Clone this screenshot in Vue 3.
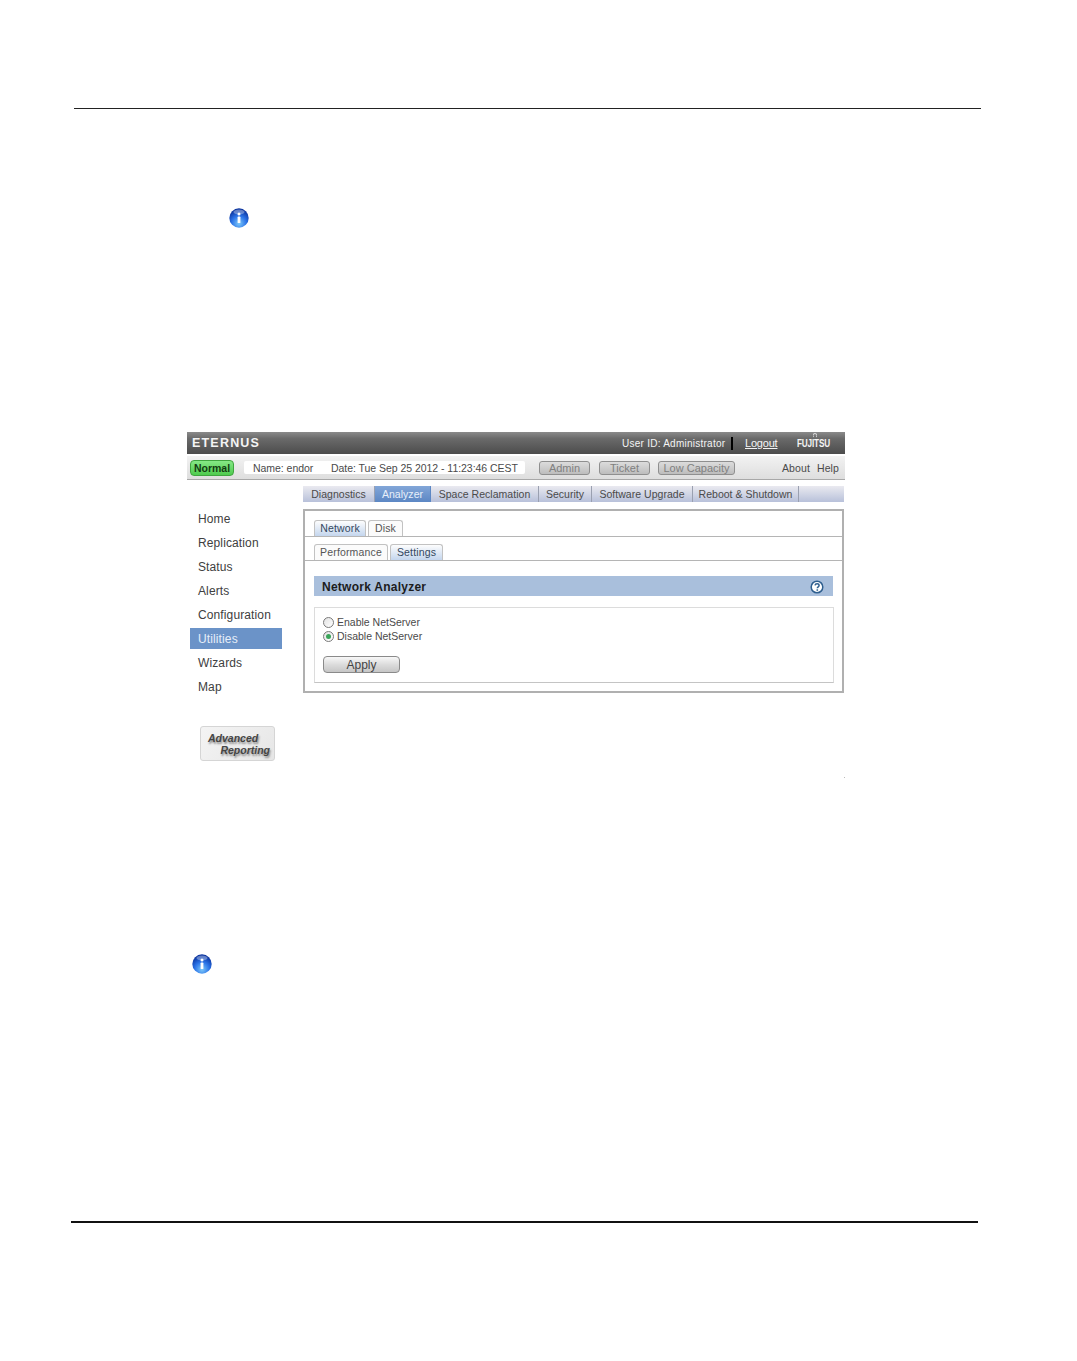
<script setup>
const navItems = ['Home', 'Replication', 'Status', 'Alerts', 'Configuration', 'Utilities', 'Wizards', 'Map']
const mainTabs = [
  { label: 'Diagnostics', w: 72 },
  { label: 'Analyzer', w: 56, active: true },
  { label: 'Space Reclamation', w: 108 },
  { label: 'Security', w: 53 },
  { label: 'Software Upgrade', w: 101 },
  { label: 'Reboot & Shutdown', w: 106 }
]
</script>

<template>
  <div class="page">
    <div class="top-rule"></div>

    <svg class="info info-a" viewBox="0 0 20 20" width="20" height="20" aria-hidden="true">
      <defs>
        <radialGradient id="ball" cx="50%" cy="78%" r="70%">
          <stop offset="0" stop-color="#7cc8fb" />
          <stop offset="0.55" stop-color="#2a72e6" />
          <stop offset="1" stop-color="#0b35a0" />
        </radialGradient>
      </defs>
      <circle cx="10" cy="10" r="9.700" fill="url(#ball)" />
      <ellipse cx="10" cy="4" rx="5.500" ry="2.600" fill="#fff" opacity="0.35" />
      <circle cx="10" cy="6" r="1.500" fill="#fff" />
      <rect x="8.600" y="8.600" width="2.800" height="6.400" rx="0.600" fill="#fff" />
    </svg>

    <section class="screen">
      <header class="brand-bar">
        <span class="brand">ETERNUS</span>
        <span class="user">User ID: Administrator</span>
        <span class="divider"></span>
        <span class="logout">Logout</span>
        <span class="fujitsu">FUJITSU</span>
      </header>

      <div class="status-bar">
        <span class="pill">Normal</span>
        <div class="identity">
          <span class="name">Name: endor</span>
          <span>Date: Tue Sep 25 2012 - 11:23:46 CEST</span>
        </div>
        <span class="alert-btn admin">Admin</span>
        <span class="alert-btn ticket">Ticket</span>
        <span class="alert-btn capacity">Low Capacity</span>
        <span class="about">About</span>
        <span class="help">Help</span>
      </div>

      <div class="body">
        <aside class="side">
          <nav class="nav">
            <div
              v-for="item in navItems"
              :key="item"
              class="nav-item"
              :class="{ current: item === 'Utilities' }"
            >{{ item }}</div>
          </nav>
          <div class="report">
            <span>Advanced</span>
            <span class="report-b">Reporting</span>
          </div>
        </aside>

        <main class="main">
          <div class="main-tabs">
            <div
              v-for="tab in mainTabs"
              :key="tab.label"
              class="main-tab"
              :class="{ active: tab.active }"
              :style="{ width: tab.w + 'px' }"
            >{{ tab.label }}</div>
          </div>

          <div class="panel">
            <div class="sub-row first">
              <span class="sub-tab on w-network">Network</span>
              <span class="sub-tab w-disk">Disk</span>
            </div>
            <div class="sub-row second">
              <span class="sub-tab w-perf">Performance</span>
              <span class="sub-tab on w-set">Settings</span>
            </div>

            <div class="title-bar">
              <span>Network Analyzer</span>
              <svg viewBox="0 0 14 14" width="14" height="14" aria-hidden="true">
                <circle cx="7" cy="7" r="5.800" fill="#fff" stroke="#2f5f8f" stroke-width="1.500" />
                <path d="M5 5.400c.2-1.200 1-1.700 2.100-1.700s2 .7 2 1.700c0 1.400-1.800 1.400-1.800 2.800" fill="none" stroke="#2f5f8f" stroke-width="1.500" />
                <rect x="6.500" y="9.300" width="1.600" height="1.500" fill="#2f5f8f" />
              </svg>
            </div>

            <div class="form-box">
              <label class="radio-row">
                <span class="radio"></span>
                <span>Enable NetServer</span>
              </label>
              <label class="radio-row">
                <span class="radio checked"></span>
                <span>Disable NetServer</span>
              </label>
              <div class="apply">Apply</div>
            </div>
          </div>
        </main>
      </div>
      <span class="speck"></span>
    </section>

    <svg class="info info-b" viewBox="0 0 20 20" width="20" height="20" aria-hidden="true">
      <circle cx="10" cy="10" r="9.700" fill="url(#ball)" />
      <ellipse cx="10" cy="4" rx="5.500" ry="2.600" fill="#fff" opacity="0.35" />
      <circle cx="10" cy="6" r="1.500" fill="#fff" />
      <rect x="8.600" y="8.600" width="2.800" height="6.400" rx="0.600" fill="#fff" />
    </svg>

    <div class="bottom-rule"></div>
  </div>
</template>

<style>
html, body { margin: 0; background: #fff; }
</style>

<style scoped>
.page {
  width: 1077px;
  height: 1361px;
  overflow: hidden;
  background: #fff;
  font-family: "Liberation Sans", Arial, sans-serif;
  color: #333;
}
.top-rule {
  margin: 108px 0 0 74px;
  width: 907px;
  height: 1px;
  background: #222;
}
.info { display: block; }
.info-a { margin: 99px 0 0 229px; }
.screen {
  position: relative;
  width: 658px;
  height: 348px;
  margin: 204px 0 0 187px;
}
.brand-bar {
  height: 22px;
  display: flex;
  align-items: center;
  background: linear-gradient(#8a8a8a, #6a6a6a 30%, #4c4c4c);
  color: #f4f4f4;
  font-size: 11px;
}
.brand {
  margin-left: 5px;
  width: 430px;
  font-size: 12.500px;
  font-weight: 700;
  letter-spacing: 1.200px;
}
.user {
  width: 109px;
  font-size: 10px;
  letter-spacing: .25px;
  white-space: nowrap;
}
.divider { width: 2px; height: 13px; background: #000; }
.logout {
  margin-left: 12px;
  width: 52px;
  text-decoration: underline;
  letter-spacing: -.2px;
}
.fujitsu {
  position: relative;
  display: inline-block;
  font-size: 10.500px;
  font-weight: 700;
  letter-spacing: -.2px;
  white-space: nowrap;
  transform: scaleX(.78);
  transform-origin: left center;
}
.fujitsu::after {
  content: "";
  position: absolute;
  left: 20px;
  top: -4px;
  width: 6px;
  height: 5px;
  box-sizing: border-box;
  border: 1px solid #e4e4e4;
  border-bottom-color: transparent;
  border-radius: 50%;
}
.status-bar {
  margin-top: 2px;
  height: 23px;
  display: flex;
  align-items: center;
  background: linear-gradient(#f2f2f2, #dedede);
  border-bottom: 1px solid #a8a8a8;
  font-size: 10.500px;
  color: #4a4a4a;
  letter-spacing: .1px;
}
.pill {
  margin-left: 3px;
  width: 44px;
  height: 16px;
  box-sizing: border-box;
  border: 1px solid #3fa53f;
  border-radius: 4px;
  background: linear-gradient(#86e886, #4ecb4e);
  color: #123c12;
  font-weight: 700;
  font-size: 10.500px;
  line-height: 14px;
  text-align: center;
  letter-spacing: 0;
}
.identity {
  margin-left: 10px;
  width: 281px;
  height: 13px;
  padding-left: 9px;
  box-sizing: border-box;
  display: flex;
  background: #fff;
  border-radius: 2px;
  line-height: 14px;
  letter-spacing: -.04px;
  white-space: nowrap;
}
.name { width: 78px; }
.alert-btn {
  height: 14px;
  box-sizing: border-box;
  border: 1px solid #8f8f8f;
  border-radius: 3px;
  background: linear-gradient(#dcdcdc, #bdbdbd);
  color: #808080;
  font-size: 11px;
  font-weight: 400;
  line-height: 12px;
  text-align: center;
  letter-spacing: 0;
  white-space: nowrap;
}
.admin { margin-left: 14px; width: 51px; }
.ticket { margin-left: 9px; width: 51px; }
.capacity { margin-left: 8px; width: 77px; }
.about { margin-left: 47px; width: 35px; white-space: nowrap; }
.help { white-space: nowrap; }
.body {
  display: flex;
  margin-top: 6px;
}
.side { width: 116px; flex: none; }
.nav { padding: 22px 0 0 3px; }
.nav-item {
  width: 92px;
  height: 21px;
  margin-bottom: 3px;
  padding-left: 8px;
  box-sizing: border-box;
  font-size: 12px;
  line-height: 23px;
  letter-spacing: .12px;
  color: #404040;
}
.nav-item.current {
  background: #6b93c8;
  color: #e6eef8;
}
.report {
  width: 75px;
  height: 35px;
  margin: 29px 0 0 13px;
  box-sizing: border-box;
  border: 1px solid #d5d5d5;
  border-radius: 3px;
  background: linear-gradient(135deg, #f4f4f4, #e6e6e6);
  padding: 5px 4px 0 7px;
  display: flex;
  flex-direction: column;
  font-size: 10.500px;
  line-height: 12px;
  font-weight: 700;
  font-style: italic;
  color: #444;
  text-shadow: 1px 2px 2px #888;
}
.report-b { align-self: flex-end; }
.main { flex: 1; min-width: 0; }
.main-tabs {
  height: 16px;
  display: flex;
  width: 541px;
  background: linear-gradient(#eaeaf0, #b8c1da);
  font-size: 10.500px;
  letter-spacing: .03px;
  color: #4a4a4a;
}
.main-tab {
  box-sizing: border-box;
  border-right: 1px solid #9aa0b0;
  line-height: 16px;
  text-align: center;
  white-space: nowrap;
}
.main-tab.active {
  background: linear-gradient(#82a6d8, #5c87c4);
  color: #e8f0fa;
  border-right-color: #5c87c4;
}
.panel {
  margin-top: 7px;
  width: 541px;
  height: 184px;
  box-sizing: border-box;
  border: 2px solid #b0b0b0;
}
.sub-row {
  display: flex;
  gap: 2px;
  padding-left: 9px;
  height: 17px;
  border-bottom: 1px solid #b5b5b5;
  align-items: flex-end;
  box-sizing: border-box;
}
.first { margin-top: 9px; }
.second { margin-top: 7px; }
.sub-tab {
  height: 16px;
  box-sizing: border-box;
  border: 1px solid #c2c2c2;
  border-bottom: 0;
  border-radius: 3px 3px 0 0;
  background: #fbfbfb;
  font-size: 10.500px;
  line-height: 15px;
  letter-spacing: .15px;
  color: #555;
  text-align: center;
}
.sub-tab.on {
  background: linear-gradient(#fdfdfd, #c4d6ee);
  color: #33475f;
}
.w-network { width: 52px; }
.w-disk { width: 35px; }
.w-perf { width: 74px; }
.w-set { width: 53px; }
.title-bar {
  margin: 15px 0 0 9px;
  width: 519px;
  height: 20px;
  box-sizing: border-box;
  padding: 1px 9px 0 8px;
  display: flex;
  align-items: center;
  justify-content: space-between;
  background: #a9bfdc;
  font-size: 12px;
  font-weight: 700;
  letter-spacing: .25px;
  color: #1c1c1c;
}
.form-box {
  margin: 11px 0 0 9px;
  width: 520px;
  height: 76px;
  box-sizing: border-box;
  border: 1px solid #dcdcdc;
  border-bottom-color: #c4c4c4;
  padding: 7px 0 0 8px;
}
.radio-row {
  display: flex;
  align-items: center;
  gap: 3px;
  height: 14px;
  font-size: 10.500px;
  letter-spacing: 0;
  color: #4a4a4a;
}
.radio {
  position: relative;
  width: 11px;
  height: 11px;
  box-sizing: border-box;
  border: 1px solid #7a7a7a;
  border-radius: 50%;
  background: linear-gradient(135deg, #e2e2e2, #fff);
}
.radio.checked::after {
  content: "";
  position: absolute;
  left: 2px;
  top: 2px;
  width: 5px;
  height: 5px;
  border-radius: 50%;
  background: #3aa55a;
}
.apply {
  margin-top: 13px;
  width: 77px;
  height: 17px;
  box-sizing: border-box;
  border: 1px solid #8a8a8a;
  border-radius: 4px;
  background: linear-gradient(#f8f8f8, #dcdcdc 50%, #c6c6c6);
  font-size: 12px;
  line-height: 16px;
  text-align: center;
  color: #444;
}
.speck {
  position: absolute;
  right: 0;
  top: 345px;
  width: 1px;
  height: 1px;
  background: #bbb;
}
.info-b { margin: 174px 0 0 192px; }
.bottom-rule {
  margin: 247px 0 0 71px;
  width: 907px;
  height: 2px;
  background: #111;
}
</style>
